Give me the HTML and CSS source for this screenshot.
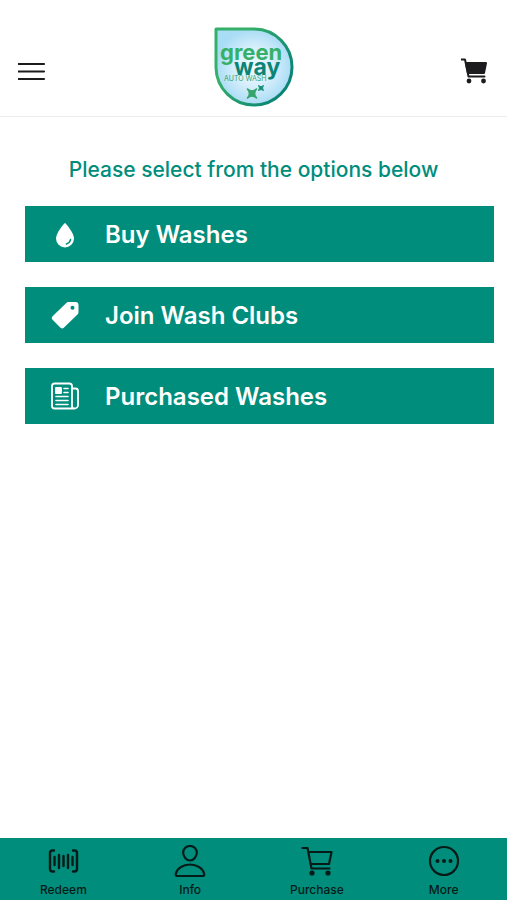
FILE: index.html
```html
<!DOCTYPE html>
<html lang="en">
<head>
  <meta charset="UTF-8">
  <meta name="viewport" content="width=device-width, initial-scale=1">
  <title>Green Way Auto Wash</title>
  <link rel="stylesheet" href="styles.css">
</head>
<body>
  <header class="header">
    <button class="icon-btn" type="button" aria-label="Menu">
      <svg width="28" height="28" viewBox="0 0 28 28" fill="none" stroke="#1c1c1e" stroke-width="2.2" stroke-linecap="round">
        <path d="M0.500 7H26M0.500 14.500H26M0.500 22H26"/>
      </svg>
    </button>

    <svg class="logo" width="80" height="80" viewBox="0 0 80 80" role="img" aria-label="Green Way Auto Wash">
      <defs>
        <radialGradient id="drop">
          <stop offset="0" stop-color="#f2faff"/>
          <stop offset="0.5" stop-color="#d8effc"/>
          <stop offset="1" stop-color="#a9dcf5"/>
        </radialGradient>
        <linearGradient id="edge" x1="0" y1="0" x2="1" y2="0.6">
          <stop offset="0.3" stop-color="#35b069"/>
          <stop offset="1" stop-color="#0b8475"/>
        </linearGradient>
      </defs>
      <path d="M2 2H40.500A38 38 0 1 1 2 40.500Z" fill="url(#drop)" stroke="url(#edge)" stroke-width="3" stroke-linejoin="round"/>
      <text class="logo-green" x="6" y="33">green</text>
      <text class="logo-way" x="20" y="48">way</text>
      <text class="logo-small" x="10" y="54">AUTO WASH</text>
      <path d="M33.500 62Q38 66 42.500 62Q38.500 66.500 42.500 71Q38 67 33.500 71Q37.500 66.500 33.500 62Z" fill="#35a56b" stroke="#35a56b" stroke-width="1.600" stroke-linejoin="round"/>
      <path d="M44.500 58.500Q47 61 49.500 58.500Q47.500 61 49.500 63.500Q47 61.500 44.500 63.500Q46.500 61 44.500 58.500Z" fill="#15907a" stroke="#15907a" stroke-linejoin="round"/>
    </svg>

    <button class="icon-btn" type="button" aria-label="Cart">
      <svg width="28" height="28" viewBox="0 0 28 28" fill="none" stroke="#1c1c1e" stroke-width="2" stroke-linecap="round" stroke-linejoin="round">
        <path d="M0.500 2.500H4L7.500 19.500H23.500"/>
        <path d="M5 6H25L23 16H7Z" fill="#1c1c1e"/>
        <circle cx="8" cy="24" r="1.400" fill="#1c1c1e"/>
        <circle cx="22.500" cy="24" r="1.400" fill="#1c1c1e"/>
      </svg>
    </button>
  </header>

  <main class="main">
    <h1 class="prompt">Please select from the options below</h1>

    <div class="options">
      <button class="option" type="button">
        <svg width="28" height="28" viewBox="0 0 28 28">
          <path d="M14 3C14.800 3 23 13 23 18.500A9 9 0 0 1 5 18.500C5 13 13.200 3 14 3Z" fill="#fff"/>
          <path d="M19.500 19.500Q19 23 15.500 24" fill="none" stroke="#008d7c" stroke-width="1.500" stroke-linecap="round"/>
        </svg>
        Buy Washes
      </button>

      <button class="option" type="button">
        <svg width="28" height="28" viewBox="0 0 28 28">
          <path fill="#fff" fill-rule="evenodd" d="M17.500 1H24.500Q27.500 1 27.500 4V11Q27.500 12.500 26.500 13.500L12.500 27Q11 28 9.500 26.700L1.300 18.500Q0 17 1.300 15.500L15.300 2Q16.200 1 17.500 1ZM21.500 4.800A2 2 0 1 0 21.500 8.800A2 2 0 1 0 21.500 4.800Z"/>
        </svg>
        Join Wash Clubs
      </button>

      <button class="option" type="button">
        <svg width="28" height="28" viewBox="0 0 28 28" fill="none" stroke="#fff" stroke-width="1.800" stroke-linecap="round" stroke-linejoin="round">
          <path d="M21 24V4Q21 1.500 18.500 1.500H3.500Q1 1.500 1 4V24Q1 26.500 3.500 26.500H23.500A3.500 3.500 0 0 0 27 23V9Q27 6.500 24.500 6.500H21M21 24Q21 26.500 23.500 26.500"/>
          <path d="M13 6.500H17M13 10.500H17M5 14.500H17M5 18.500H17M5 22.500H17" stroke-width="1.600"/>
          <rect x="5" y="6" width="5" height="5" fill="#fff"/>
        </svg>
        Purchased Washes
      </button>
    </div>
  </main>

  <nav class="tabs">
    <a class="tab" href="#redeem">
      <svg width="32" height="32" viewBox="0 0 32 32" fill="none" stroke="#041b18" stroke-width="2.400" stroke-linecap="round" stroke-linejoin="round">
        <path d="M7 5.500H5.500Q3 5.500 3 8V24Q3 26.500 5.500 26.500H7M26 5.500H27.500Q30 5.500 30 8V24Q30 26.500 27.500 26.500H26M7.500 12V20M12 10V23M16.500 11V21M21 10V23M25.500 12V20"/>
      </svg>
      Redeem
    </a>
    <a class="tab" href="#info">
      <svg width="32" height="32" viewBox="0 0 32 32" fill="none" stroke="#041b18" stroke-width="2.200" stroke-linejoin="round">
        <path d="M16 1C20 1 23 4 22.800 8C22.500 12 19.500 15.500 16 15.500S9.500 12 9.200 8C9 4 12 1 16 1Z"/>
        <path d="M16 19.500C9 19.500 3 23.500 1.800 29C1.500 30.500 2.300 31 3.500 31H28.500C29.700 31 30.500 30.500 30.200 29C29 23.500 23 19.500 16 19.500Z"/>
      </svg>
      Info
    </a>
    <a class="tab" href="#purchase">
      <svg width="32" height="32" viewBox="0 0 32 32" fill="none" stroke="#041b18" stroke-width="2.200" stroke-linecap="round" stroke-linejoin="round">
        <path d="M1.500 3H6.500L10.500 23.500H28.500M7.500 7H30.500L28 19H9.500"/>
        <circle cx="11" cy="28" r="1.500" fill="#041b18"/>
        <circle cx="27" cy="28" r="1.500" fill="#041b18"/>
      </svg>
      Purchase
    </a>
    <a class="tab" href="#more">
      <svg width="32" height="32" viewBox="0 0 32 32">
        <circle cx="16" cy="16" r="14" fill="none" stroke="#041b18" stroke-width="2.200"/>
        <g fill="#041b18">
          <circle cx="9.500" cy="16" r="2"/>
          <circle cx="16" cy="16" r="2"/>
          <circle cx="22.500" cy="16" r="2"/>
        </g>
      </svg>
      More
    </a>
  </nav>
</body>
</html>
```

FILE: styles.css
```css
* {
  box-sizing: border-box;
}

body {
  font-family: Inter, "Liberation Sans", sans-serif;
  background-color: #fff;
  margin: 0;
  min-height: 100vh;
  display: flex;
  flex-direction: column;
}

button {
  font-family: inherit;
  border: none;
  cursor: pointer;
}

svg {
  display: block;
  flex: none;
}

/* Top bar */
.header {
  display: flex;
  align-items: center;
  justify-content: space-between;
  padding: 27px 18px 9px;
  border-bottom: 1px solid #ececec;
}

.icon-btn {
  padding: 8px 0 0;
  background: none;
}

.logo-green,
.logo-way {
  font-weight: 700;
}

.logo-green {
  font-size: 22px;
  fill: #35b069;
}

.logo-way {
  font-size: 23px;
  fill: #0b8475;
}

.logo-small {
  font-size: 7px;
  fill: #35a56b;
}

/* Options */
.main {
  flex: 1;
  padding: 39px 13px 24px 25px;
}

.prompt {
  margin: 0 12px 22px 0;
  font-size: 21px;
  line-height: 28px;
  font-weight: 500;
  text-align: center;
  color: #008d7c;
}

.options {
  display: flex;
  flex-direction: column;
  gap: 25px;
}

.option {
  display: flex;
  align-items: center;
  gap: 26px;
  height: 56px;
  padding: 0 26px;
  background-color: #008d7c;
  color: #fff;
  font-size: 24px;
  font-weight: 600;
  text-align: left;
}

/* Bottom tabs */
.tabs {
  display: grid;
  grid-template-columns: repeat(4, 1fr);
  background-color: #008d7c;
}

.tab {
  display: flex;
  flex-direction: column;
  align-items: center;
  gap: 5px;
  padding: 7px 0 2px;
  font-size: 12px;
  line-height: 16px;
  font-weight: 500;
  color: #041b18;
  text-decoration: none;
}
```
